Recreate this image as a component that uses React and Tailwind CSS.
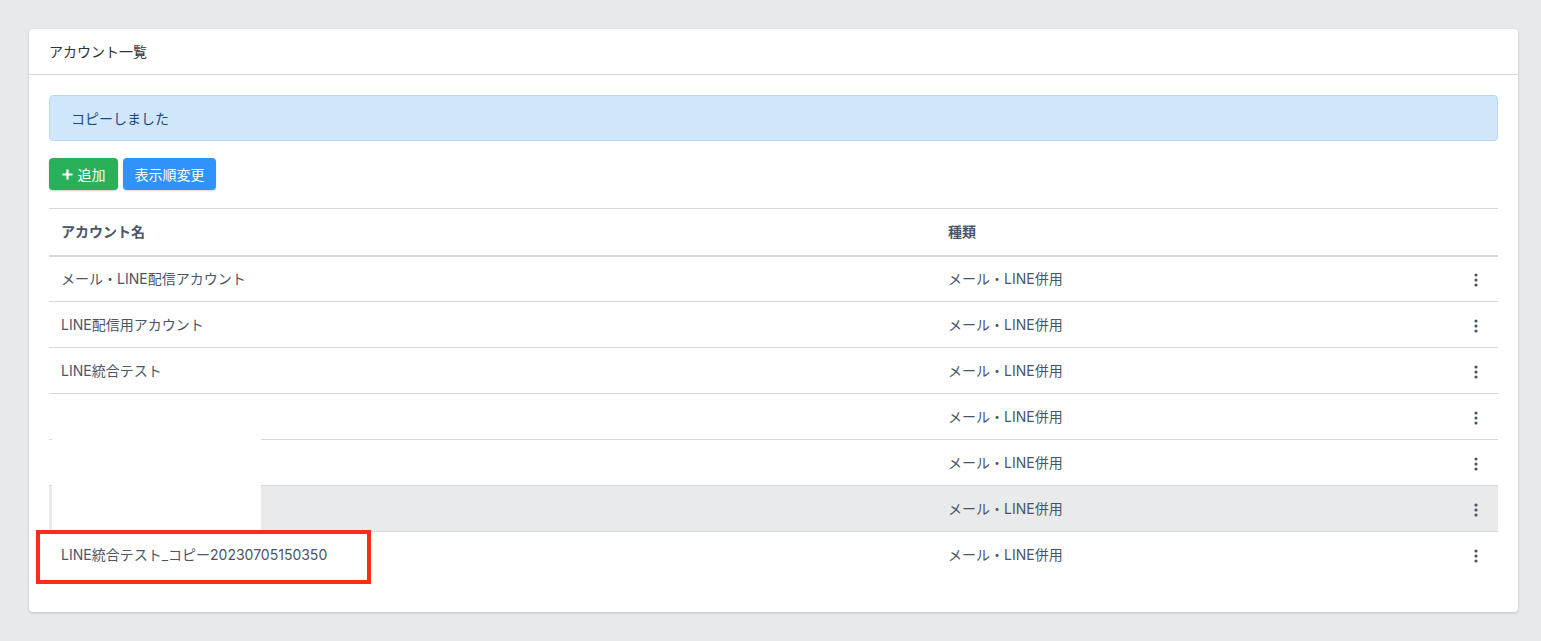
import React from 'react';

const rows = [
  { name: 'メール・LINE配信アカウント', type: 'メール・LINE併用' },
  { name: 'LINE配信用アカウント', type: 'メール・LINE併用' },
  { name: 'LINE統合テスト', type: 'メール・LINE併用' },
  { name: '', type: 'メール・LINE併用' },
  { name: '', type: 'メール・LINE併用' },
  { name: '', type: 'メール・LINE併用', hover: true },
  { name: 'LINE統合テスト_コピー20230705150350', type: 'メール・LINE併用' },
];

const Kebab = () => (
  <svg width="4" height="14" viewBox="0 0 4 14" className="inline-block">
    <circle cx="2" cy="2" r="1.6" fill="#4a5568" />
    <circle cx="2" cy="7" r="1.6" fill="#4a5568" />
    <circle cx="2" cy="12" r="1.6" fill="#4a5568" />
  </svg>
);

export default function App() {
  return (
    <div
      className="min-h-screen bg-[#e8e9eb] pl-[29px] pr-[23px] pt-[29px] pb-[29px]"
      style={{ fontFamily: 'Inter, "Noto Sans CJK JP", sans-serif' }}
    >
      <div className="relative bg-white rounded shadow-[0_1px_3px_rgba(0,0,0,0.18)]">
        {/* header */}
        <div className="h-[46px] px-5 flex items-center border-b border-[#d6d8db] text-[14px] text-[#333]">
          アカウント一覧
        </div>

        <div className="px-5 pt-5 pb-[34px]">
          {/* alert */}
          <div className="h-[46px] flex items-center px-[21px] bg-[#d0e6fb] border border-[#b9d8f6] rounded text-[14px] text-[#1c4a7e]">
            コピーしました
          </div>

          {/* buttons */}
          <div className="flex gap-[5px] mt-[17px] mb-[18px]">
            <button className="h-[32px] w-[69px] flex items-center justify-center gap-[5px] bg-[#28b05a] text-white text-[14px] rounded shadow-[0_1px_2px_rgba(0,0,0,0.2)]">
              <svg width="11" height="11" viewBox="0 0 11 11">
                <path d="M5.5 0.5v10M0.5 5.5h10" stroke="white" strokeWidth="2.2" />
              </svg>
              追加
            </button>
            <button className="h-[32px] w-[93px] flex items-center justify-center bg-[#2f93fb] text-white text-[14px] rounded shadow-[0_1px_2px_rgba(0,0,0,0.15)]">
              表示順変更
            </button>
          </div>

          {/* table */}
          <table className="w-full border-collapse text-[14px] text-[#4a5568]">
            <thead>
              <tr className="border-t border-[#d6d8db] border-b-2 border-b-[#d6d8db]">
                <th className="h-[47px] pl-3 text-left font-semibold w-[887px]">アカウント名</th>
                <th className="pl-3 text-left font-semibold">種類</th>
                <th className="w-[44px]"></th>
              </tr>
            </thead>
            <tbody>
              {rows.map((r, i) => (
                <tr
                  key={i}
                  className={`${i < rows.length - 1 ? 'border-b border-[#d6d8db]' : ''} ${r.hover ? 'bg-[#e9eaec]' : ''}`}
                >
                  <td className="h-[46px] pl-3">{r.name}</td>
                  <td className="pl-3">{r.type}</td>
                  <td className="text-center">
                    <Kebab />
                  </td>
                </tr>
              ))}
            </tbody>
          </table>
        </div>

        {/* redaction block */}
        <div className="absolute left-[23px] top-[410px] w-[209px] h-[92px] bg-white"></div>
        {/* annotation box */}
        <div className="absolute left-[7px] top-[501px] w-[335px] h-[54px] border-[4px] border-[#ff2a1a]"></div>
      </div>
    </div>
  );
}
